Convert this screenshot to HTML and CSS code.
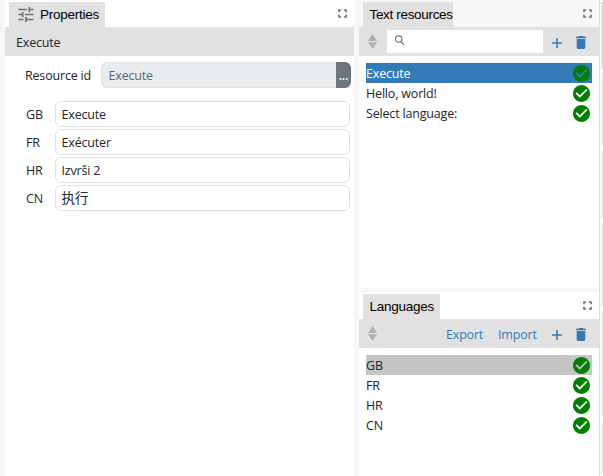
FILE: index.html
```html
<!DOCTYPE html>
<html lang="en">
<head>
<meta charset="utf-8">
<title>Text resources</title>
<link rel="stylesheet" href="styles.css">
</head>
<body>
<svg class="defs" width="0" height="0">
  <symbol id="full" viewBox="0 0 9 9"><path d="M1 3.200V1h2.200M5.800 1H8v2.200M8 5.800V8H5.800M3.200 8H1V5.800" fill="none" stroke="#777" stroke-width="1.700"/></symbol>
  <symbol id="tune" viewBox="3 3 18 18"><path d="M3 17v2h6v-2H3zM3 5v2h10V5H3zm10 16v-2h8v-2h-8v-2h-2v6h2zM7 9v2H3v2h4v2h2V9H7zm14 4v-2H11v2h10zm-6-4h2V7h4V5h-4V3h-2v6z" fill="#707070"/></symbol>
  <symbol id="sort" viewBox="0 0 9 15"><path d="M4.500 0L9 7H0zM0 8.200h9L4.500 15z" fill="#b0b0b0"/></symbol>
  <symbol id="search" viewBox="0 0 10 10"><circle cx="4.300" cy="3.700" r="2.900" fill="none" stroke="#777"/><path d="M6.200 5.800L9 9" stroke="#777" stroke-width="1.200"/></symbol>
  <symbol id="plus" viewBox="0 0 10 10"><path d="M5 0v10M0 5h10" stroke="#337ab7" stroke-width="1.500"/></symbol>
  <symbol id="trash" viewBox="5 3 14 18"><path d="M6 19c0 1.100.9 2 2 2h8c1.100 0 2-.9 2-2V7H6v12zM19 4h-3.500l-1-1h-5l-1 1H5v2h14V4z" fill="#337ab7"/></symbol>
  <symbol id="check" viewBox="2 2 20 20"><path d="M12 2C6.480 2 2 6.480 2 12s4.480 10 10 10 10-4.480 10-10S17.520 2 12 2zm-2 15l-5-5 1.410-1.410L10 14.170l7.590-7.590L19 8l-9 9z" fill="#008000"/></symbol>
</svg>
<div class="app">
  <div class="edge"></div>
  <section class="panel properties">
    <div class="tabs"><div class="tab tab-props"><svg class="tune"><use href="#tune"/></svg>Properties</div><svg class="full"><use href="#full"/></svg></div>
    <div class="bar title">Execute</div>
    <div class="resource"><span class="label">Resource id</span><span class="rid">Execute</span><span class="more">...</span></div>
    <div class="fields">
      <span>GB</span><div class="input">Execute</div>
      <span>FR</span><div class="input">Exécuter</div>
      <span>HR</span><div class="input">Izvrši 2</div>
      <span>CN</span><div class="input cjk">执行</div>
    </div>
  </section>
  <div class="side">
    <section class="panel resources">
      <div class="tabs inactive"><div class="tab tab-res">Text resources</div><svg class="full"><use href="#full"/></svg></div>
      <div class="bar tools"><svg class="sort"><use href="#sort"/></svg><div class="search"><svg><use href="#search"/></svg></div><svg class="plus"><use href="#plus"/></svg><svg class="trash"><use href="#trash"/></svg></div>
      <div class="list">
        <div class="row active">Execute<svg><use href="#check"/></svg></div>
        <div class="row">Hello, world!<svg><use href="#check"/></svg></div>
        <div class="row">Select language:<svg><use href="#check"/></svg></div>
      </div>
    </section>
    <section class="panel languages">
      <div class="tabs"><div class="tab tab-lang">Languages</div><svg class="full"><use href="#full"/></svg></div>
      <div class="bar tools"><svg class="sort"><use href="#sort"/></svg><div class="links"><span class="export">Export</span><span class="import">Import</span></div><svg class="plus"><use href="#plus"/></svg><svg class="trash"><use href="#trash"/></svg></div>
      <div class="list">
        <div class="row chosen">GB<svg><use href="#check"/></svg></div>
        <div class="row">FR<svg><use href="#check"/></svg></div>
        <div class="row">HR<svg><use href="#check"/></svg></div>
        <div class="row">CN<svg><use href="#check"/></svg></div>
      </div>
    </section>
  </div>
  <div class="gutter"><i class="s1"></i><i class="s2"></i><i class="s3"></i><i class="s4"></i><i class="s5"></i><i class="s6"></i></div>
</div>
</body>
</html>
```
FILE: styles.css
```css
* { box-sizing: border-box; }
body { margin: 0; overflow: hidden; font: 12.5px/20px "Open Sans", "Noto Sans CJK SC", sans-serif; letter-spacing: -0.18px; color: #212529; }
svg { display: block; flex: none; }
.defs { position: absolute; }
.app { display: flex; width: 603px; height: 476px; background: #f7f7f7; }
.edge { width: 5px; background: linear-gradient(90deg, #ddd 1px, transparent 1px) 0 27px / 100% 1px no-repeat; }
.panel { background: #fff; }
.properties { width: 349px; }
.tabs { display: flex; height: 27px; padding: 2px 7px 0 4px; justify-content: space-between; }
.inactive { background: #f7f7f7; }
.tab { display: flex; align-items: center; height: 25px; padding: 0 0 0 6.5px; background: #e1e1e1; color: #000; font: 13.5px/25px "Liberation Sans", sans-serif; letter-spacing: -0.33px; white-space: nowrap; }
.tab-props { width: 96px; padding-left: 6px; letter-spacing: -0.25px; }
.tab-res { width: 90px; }
.tab-lang { width: 77px; letter-spacing: -0.25px; }
.tune { width: 16px; height: 15px; margin: 0 6px 0 3px; }
.full { width: 9px; height: 9px; margin-top: 7px; }
.bar { display: flex; align-items: center; height: 29px; background: #e1e1e1; }
.title { padding: 2px 11px 0; }
.resource { display: flex; height: 26px; margin: 6px 3px 0 20px; line-height: 27px; }
.label { width: 76px; }
.rid { flex: 1; padding-left: 6.5px; border: 1px solid #dee2e6; border-right: 0; border-radius: 6px 0 0 6px; background: #e9ecef; color: #60666c; line-height: 25px; }
.more { width: 15px; border-radius: 0 6px 6px 0; background: #6c757d; color: #fff; text-align: center; font-weight: 600; }
.fields { display: grid; grid-template-columns: 29px 295px; row-gap: 2px; margin: 13px 0 0 21px; line-height: 27px; }
.fields > span { height: 26px; }
.input { height: 26px; padding-left: 5.5px; border: 1px solid #dee2e6; border-radius: 6px; line-height: 25px; }
.cjk { font-size: 13.5px; letter-spacing: 0; }
.side { width: 245px; padding-left: 5px; flex: none; }
.side .panel { width: 240px; }
.resources { height: 288px; }
.languages { height: 184px; margin-top: 4px; }
.tools { padding: 0 13px 0 9px; color: #337ab7; }
.sort { width: 9px; height: 15px; }
.languages .sort { margin-bottom: 1px; }
.search { flex: none; width: 156px; height: 23px; margin: 0 9px 0 10px; padding: 5px 0 0 7px; background: #fff; }
.search svg { width: 11px; height: 11px; }
.plus { width: 10px; height: 10px; margin-top: 2px; }
.trash { width: 10px; height: 13px; margin: 2px 0 0 14px; }
.links { display: flex; flex: none; width: 175px; padding-top: 3px; }
.export { width: 52px; margin-left: 69px; }
.list { padding: 7px 7px 0; }
.row { display: flex; justify-content: space-between; align-items: flex-start; height: 20px; padding-right: 2px; line-height: 22px; }
.row svg { width: 17px; height: 17px; margin-top: 2px; }
.active { background: #337ab7; color: #fff; }
.chosen { background: #c5c5c5; }
.gutter { flex: 1; display: flex; flex-direction: column; gap: 4px; padding: 2px 0 0 1px; background: #fff; border-left: 1px solid #ddd; }
.gutter i { flex: none; background: #f0f0f0; }
.gutter .s1 { height: 67px; background: #e1e1e1; }
.gutter .s2 { height: 73px; }
.gutter .s3 { height: 69px; }
.gutter .s4 { height: 84px; }
.gutter .s5 { height: 105px; }
.gutter .s6 { height: 54px; }
```
